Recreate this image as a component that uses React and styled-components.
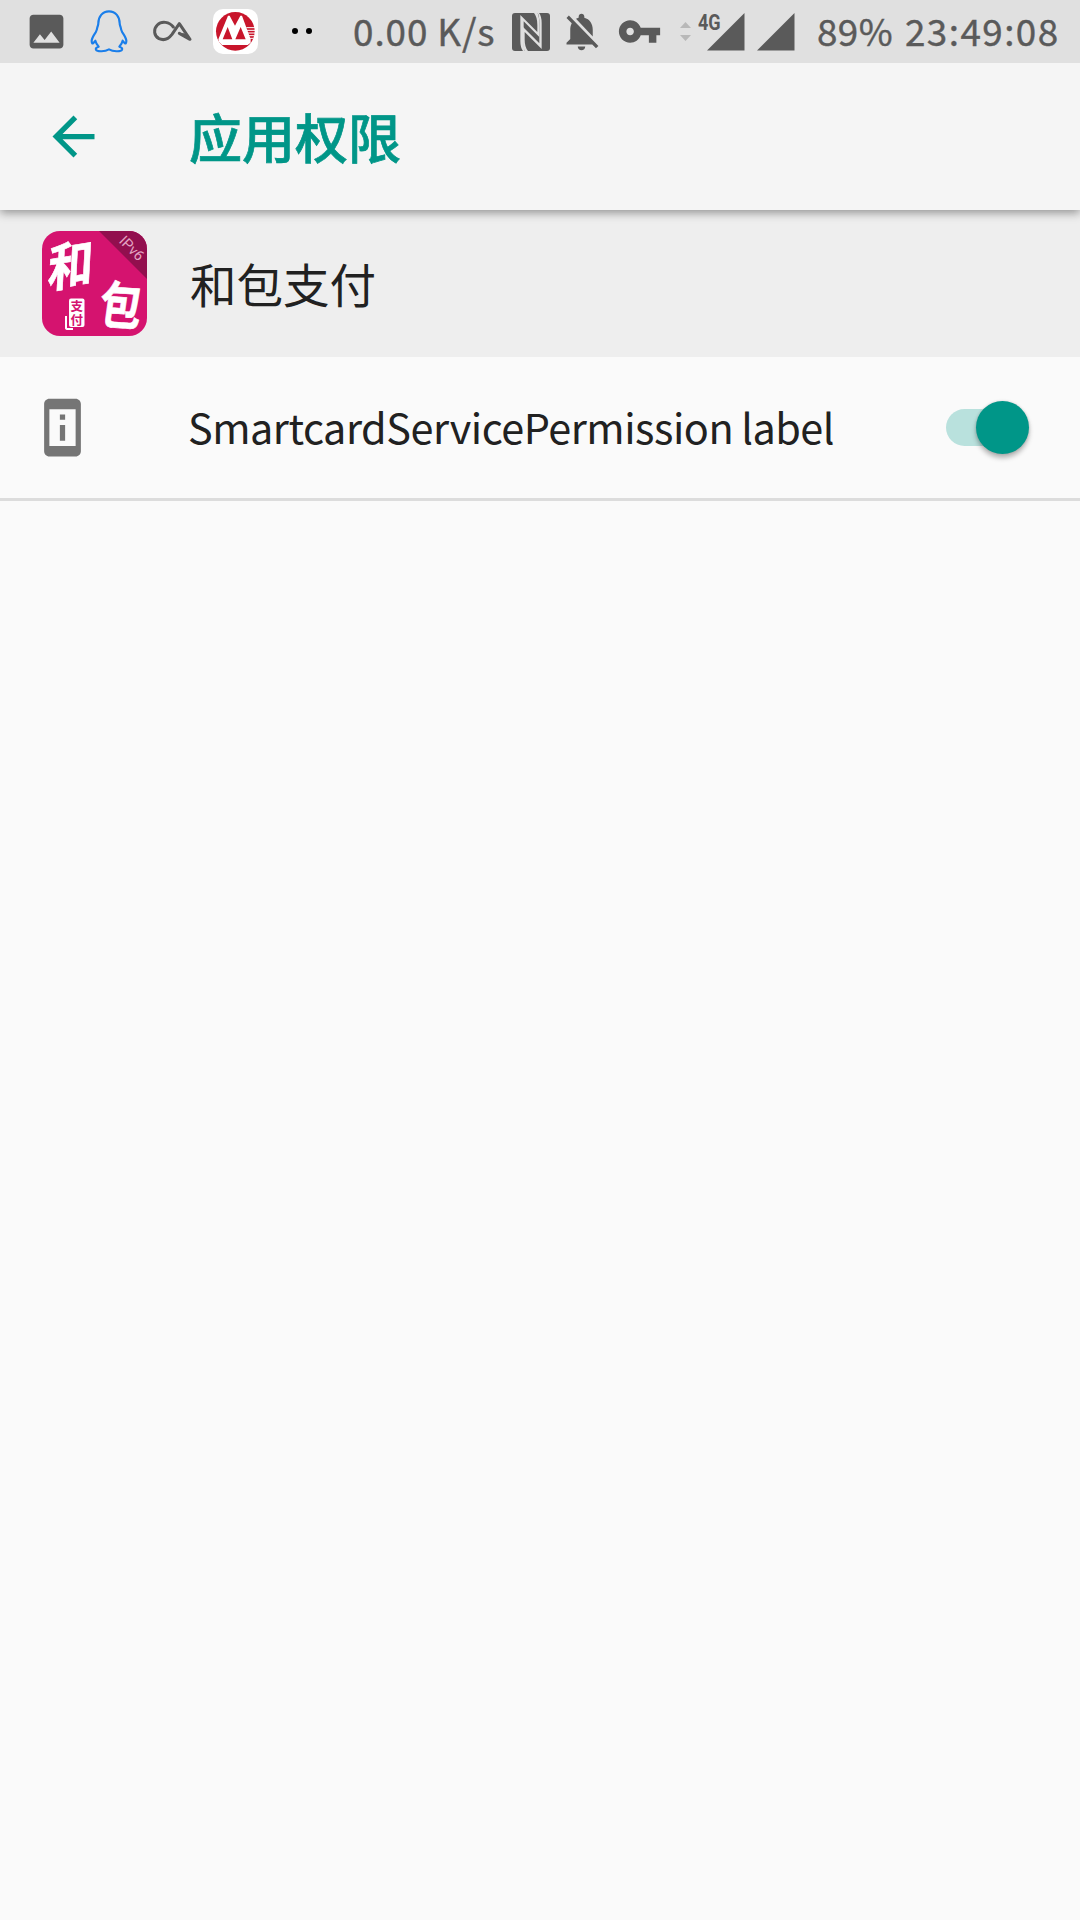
import React from "react";
import styled, { createGlobalStyle } from "styled-components";

const TEAL = "#009688";
const GREY = "#5a5a5a";
const SANS = '"Noto Sans CJK SC", "Noto Sans", sans-serif';
const LOGO_FONT = 'Roboto, "Noto Sans CJK SC", sans-serif';

const GlobalStyle = createGlobalStyle`
  *, *::before, *::after { box-sizing: border-box; }
  html, body { margin: 0; padding: 0; background: #fafafa; }
`;

const Screen = styled.main`
  width: 1080px;
  height: 1920px;
  display: flex;
  flex-direction: column;
  overflow: hidden;
  background: #fafafa;
  color: #212121;
  font-family: ${SANS};
`;

const StatusBar = styled.header`
  height: 63px;
  flex: none;
  display: flex;
  justify-content: space-between;
  padding: 0 21px 0 24px;
  background: #e0e0e0;
  color: ${GREY};
`;

const StatusGroup = styled.div`
  display: flex;
  align-items: flex-start;
`;

const Icon = styled.svg`
  display: block;
  flex: none;
  overflow: visible;
  width: ${(p) => p.$w}px;
  height: ${(p) => p.$h}px;
  margin-top: ${(p) => p.$top || 0}px;
  margin-left: ${(p) => p.$left || 0}px;
`;

const StatusText = styled.span`
  flex: none;
  width: ${(p) => p.$w}px;
  margin-left: ${(p) => p.$left || 0}px;
  line-height: 61px;
  font-size: 36.8px;
  letter-spacing: ${(p) => p.$track || 0}px;
  word-spacing: ${(p) => p.$gap || 0}px;
  white-space: nowrap;
  -webkit-text-stroke: 0.4px currentColor;
`;

const NetworkType = styled.span`
  flex: none;
  width: 9px;
  margin: 12px 0 0 7px;
  font: 700 21.5px/21px Roboto, sans-serif;
  white-space: nowrap;
  transform: scaleX(0.84);
  transform-origin: left center;
`;

const Toolbar = styled.div`
  height: 147px;
  flex: none;
  display: flex;
  align-items: center;
  padding-left: 42px;
  background: #f5f5f5;
  box-shadow: 0 3px 9px rgba(0, 0, 0, 0.38);
  clip-path: inset(0 0 -20px 0);
  z-index: 1;
`;

const BackButton = styled.button`
  display: block;
  width: 147px;
  padding: 0;
  border: 0;
  background: none;
  color: ${TEAL};
`;

const Title = styled.h1`
  margin: 0;
  padding-bottom: 1px;
  font-size: 53px;
  line-height: 64px;
  font-weight: 500;
  color: ${TEAL};
  -webkit-text-stroke: 0.7px currentColor;
`;

const AppHeader = styled.section`
  height: 147px;
  flex: none;
  display: flex;
  align-items: center;
  padding-left: 42px;
  background: #eeeeee;
`;

const AppName = styled.h2`
  margin: 0 0 0 43px;
  padding-bottom: 2px;
  font-size: 46.5px;
  line-height: 60px;
  font-weight: 400;
`;

const PermissionRow = styled.section`
  height: 144px;
  flex: none;
  display: flex;
  align-items: center;
  padding: 0 51px 0 31px;
  border-bottom: 3px solid #dcdcdc;
`;

const PermissionLabel = styled.span`
  flex: 1;
  margin-left: 94px;
  padding-bottom: 4px;
  font-size: 41.4px;
  line-height: 60px;
  letter-spacing: -0.48px;
  word-spacing: -0.8px;
  white-space: nowrap;
`;

const Track = styled.span`
  width: 83px;
  height: 37px;
  display: flex;
  align-items: center;
  justify-content: flex-end;
  border-radius: 19px;
  background: linear-gradient(90deg, #b9e1dd 66px, transparent 66px);
`;

const Thumb = styled.span`
  width: 53px;
  height: 53px;
  flex: none;
  border-radius: 50%;
  background: ${TEAL};
  box-shadow: 0 4px 5px rgba(0, 0, 0, 0.28), 0 0 3px rgba(0, 0, 0, 0.15);
`;

const ImageIcon = () => (
  <Icon $w={45} $h={45} $top={9} viewBox="0 0 24 24" fill={GREY}>
    <path d="M21 19V5c0-1.1-.9-2-2-2H5c-1.1 0-2 .9-2 2v14c0 1.1.9 2 2 2h14c1.1 0 2-.9 2-2zM8.500 13.500l2.500 3.010L14.500 12l4.500 6H5l3.500-4.500z" />
  </Icon>
);

const PenguinIcon = () => (
  <Icon $w={40} $h={45} $top={8} $left={20} viewBox="0 0 120 135" fill="none" stroke="#1a7eea" strokeWidth="6.500" strokeLinejoin="round">
    <path d="M60 10C40 10 28 26 28 46C28 51 26 54 25 58C24 64 23 68 20 73C14 82 9 89 8 98C8 104 10 108 12 106C15 104 17 100 19 98C20 104 24 110 29 116C22 118 19 121 21 125C25 132 48 131 60 124C72 131 95 132 99 125C101 121 98 118 91 116C96 110 100 104 101 98C103 100 105 104 108 106C110 108 112 104 112 98C111 89 106 82 100 73C97 68 96 64 95 58C94 54 92 51 92 46C92 26 80 10 60 10Z" />
  </Icon>
);

const LoopIcon = () => (
  <Icon $w={41} $h={24} $top={20} $left={23} viewBox="0 0 123 72" fill="none" stroke={GREY} strokeWidth="9" strokeLinecap="round" strokeLinejoin="round">
    <path d="M64 21C52 5 29 2 16 15C3 28 6 48 21 56C37 63 50 56 60 43L82 11L114 58L82 40" />
    <path d="M93 43L105 50" strokeWidth="8" />
  </Icon>
);

const BankIcon = () => (
  <Icon $w={45} $h={45} $top={9} $left={20} viewBox="0 0 135 135">
    <rect width="135" height="135" rx="30" fill="#fff" />
    <circle cx="67" cy="67" r="58" fill="#c8152b" />
    <path d="M16 91L45 20H50L66 50L82 20H87L113 91V101L104 108H27L18 98Z" fill="#fff" />
    <path d="M44 54L58 91H29ZM83 54L98 91H67Z" fill="#c8152b" />
    <path d="M100 56H126M102 64H126M105 72H126M108 80H125M111 88H122" stroke="#fff" strokeWidth="3" />
  </Icon>
);

const MoreDots = () => (
  <Icon $w={20} $h={6} $top={28} $left={34} viewBox="0 0 20 6" fill="#000">
    <circle cx="3" cy="3" r="3" />
    <circle cx="17" cy="3" r="3" />
  </Icon>
);

const NfcIcon = () => (
  <Icon $w={38} $h={38} $top={12.5} $left={16} viewBox="0 0 114 114">
    <rect width="114" height="114" rx="9" fill={GREY} />
    <g fill="#e0e0e0">
      <path d="M25 6L76 57V36Q76 12 66 0H77Q82 12 82 36V72L35 25V84Q35 106 38 114H33Q25 104 25 84Z" />
      <path d="M89 108L38 57V80Q38 102 48 114H38Q33 102 33 80V42L82 91V30Q82 8 77 0H81Q89 10 89 30Z" />
    </g>
  </Icon>
);

const BellOffIcon = () => (
  <Icon $w={45} $h={45} $top={9} $left={9} viewBox="0 0 24 24" fill={GREY}>
    <path d="M20 18.690L7.840 6.140 5.270 3.490 4 4.760l2.800 2.800v.010c-.520.990-.8 2.160-.8 3.420v5l-2 2v1h13.730l2 2L21 19.720l-1-1.030zM12 22c1.110 0 2-.890 2-2h-4c0 1.110.890 2 2 2zm6-7.320V11c0-3.080-1.640-5.640-4.500-6.320V4c0-.830-.670-1.500-1.500-1.500s-1.500.670-1.500 1.500v.680c-.150.030-.290.080-.420.120-.1.030-.2.070-.3.110h-.010c-.010 0-.010 0-.020.010-.230.090-.460.200-.680.310 0 0-.010 0-.010.010L18 14.680z" />
  </Icon>
);

const KeyIcon = () => (
  <Icon $w={45} $h={45} $top={9} $left={13} viewBox="0 0 24 24" fill={GREY}>
    <path d="M12.650 10C11.830 7.670 9.610 6 7 6c-3.310 0-6 2.690-6 6s2.690 6 6 6c2.610 0 4.830-1.670 5.650-4H17v4h4v-4h2v-4H12.650zM7 14c-1.100 0-2-.9-2-2s.9-2 2-2 2 .9 2 2-.9 2-2 2z" />
  </Icon>
);

const DataArrows = () => (
  <Icon $w={11} $h={20} $top={22} $left={18} viewBox="0 0 11 20" fill="#b8b8b8">
    <path d="M0 6L5.500 0L11 6ZM0 13H11L5.500 19Z" />
  </Icon>
);

const SignalIcon = ({ left }) => (
  <Icon $w={38} $h={38} $top={13} $left={left} viewBox="0 0 38 38" fill={GREY}>
    <path d="M0 37.500L37.500 0V37.500Z" />
  </Icon>
);

const AppLogo = () => (
  <Icon $w={105} $h={105} viewBox="0 0 105 105">
    <defs>
      <clipPath id="logo-tile">
        <rect width="105" height="105" rx="18" />
      </clipPath>
    </defs>
    <g clipPath="url(#logo-tile)">
      <rect width="105" height="105" fill="#d5136f" />
      <path d="M57 0H105V48Z" fill="#920f4e" />
    </g>
    <text x="89" y="22" transform="rotate(45 89 18)" textAnchor="middle" fontFamily="Roboto, sans-serif" fontSize="14.500" fill="#e3a5c2">
      IPv6
    </text>
    <g fill="#fff" stroke="#fff" strokeWidth="0.600" fontFamily={LOGO_FONT} fontWeight="700">
      <text transform="translate(5 57) rotate(-9) skewX(-12) scale(1 1.100)" fontSize="46">和</text>
      <text transform="translate(55 92) rotate(4) skewX(-4) scale(0.920 1.120)" fontSize="46">包</text>
    </g>
    <path d="M24 85V97Q24 98 26 98H31" fill="none" stroke="#fff" strokeWidth="2" />
    <rect x="27" y="67.500" width="15.500" height="28.500" rx="2" fill="#fff" />
    <g fill="#d5136f" fontFamily={LOGO_FONT} fontWeight="700" fontSize="12.500" textAnchor="middle">
      <text x="34.700" y="80">支</text>
      <text x="34.700" y="93.500">付</text>
    </g>
  </Icon>
);

const BackIcon = () => (
  <Icon $w={63} $h={63} viewBox="0 0 24 24" fill={TEAL}>
    <path d="M20 11H7.830l5.590-5.590L12 4l-8 8 8 8 1.410-1.410L7.830 13H20v-2z" />
  </Icon>
);

const DeviceInfoIcon = () => (
  <Icon $w={63} $h={63} viewBox="0 0 24 24" fill="#757575">
    <path d="M13 7h-2v2h2V7zm0 4h-2v6h2v-6zm4-9.990L7 1c-1.100 0-2 .9-2 2v18c0 1.100.9 2 2 2h10c1.100 0 2-.9 2-2V3c0-1.100-.9-1.990-2-1.990zM17 19H7V5h10v14z" />
  </Icon>
);

export default function App() {
  return (
    <Screen>
      <GlobalStyle />
      <StatusBar>
        <StatusGroup>
          <ImageIcon />
          <PenguinIcon />
          <LoopIcon />
          <BankIcon />
          <MoreDots />
        </StatusGroup>
        <StatusGroup>
          <StatusText $w={143} $track={0.98} $gap={-0.5}>0.00 K/s</StatusText>
          <NfcIcon />
          <BellOffIcon />
          <KeyIcon />
          <DataArrows />
          <NetworkType>4G</NetworkType>
          <SignalIcon left={0} />
          <SignalIcon left={12} />
          <StatusText $w={76} $left={22} $track={0.4}>89%</StatusText>
          <StatusText $w={154} $left={12} $track={1.45}>23:49:08</StatusText>
        </StatusGroup>
      </StatusBar>
      <Toolbar>
        <BackButton aria-label="返回">
          <BackIcon />
        </BackButton>
        <Title>应用权限</Title>
      </Toolbar>
      <AppHeader>
        <AppLogo />
        <AppName>和包支付</AppName>
      </AppHeader>
      <PermissionRow>
        <DeviceInfoIcon />
        <PermissionLabel>SmartcardServicePermission label</PermissionLabel>
        <Track role="switch" aria-checked="true">
          <Thumb />
        </Track>
      </PermissionRow>
    </Screen>
  );
}
